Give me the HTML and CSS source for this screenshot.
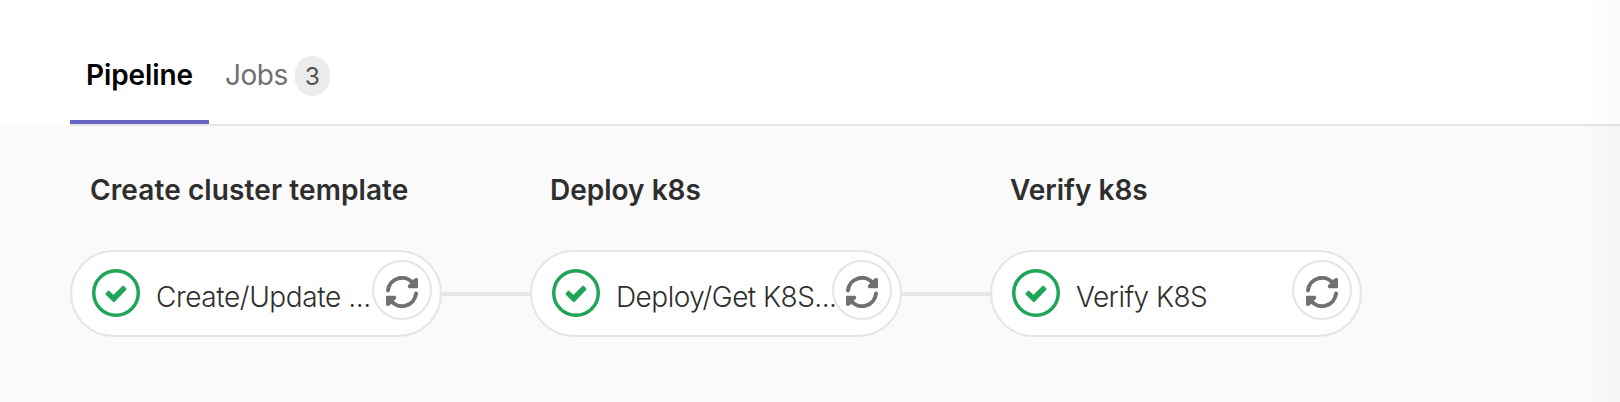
FILE: index.html
```html
<!DOCTYPE html>
<html lang="en">
<head>
<meta charset="utf-8">
<title>Pipeline</title>
<link rel="stylesheet" href="styles.css">
</head>
<body>
<svg class="sprite" aria-hidden="true">
  <symbol id="success" viewBox="0 0 14 14">
    <circle cx="7" cy="7" r="6.5" fill="none" stroke="currentColor"/>
    <path fill="currentColor" stroke="currentColor" stroke-width=".16" d="M6.278 7.597L5.045 6.464a.296.296 0 0 0-.42-.002l-.513.614a.298.298 0 0 0 .002.42l1.91 1.909a.5.5 0 0 0 .703.005l.265-.265L9.897 6.04a.291.291 0 0 0-.009-.408l-.614-.614a.29.29 0 0 0-.408-.009L6.278 7.597z"/>
  </symbol>
  <symbol id="retry" viewBox="0 0 16 16">
    <path fill="none" stroke="currentColor" stroke-width="2" stroke-linecap="round" d="M1 7.200a7 7 0 0 1 12.600-3.400M15 8.800a7 7 0 0 1-12.600 3.400"/>
    <path fill="currentColor" d="M13 2.400L14.300 1.200Q16 .6 16 1.700V5.600a.5.5 0 0 1-.5.500H11.800c-.9 0-1.200-1.200-.5-1.700L12 3.600zM3 13.600L1.700 14.800Q0 15.400 0 14.300V10.400a.5.5 0 0 1 .5-.5H4.200c.9 0 1.200 1.200.5 1.700L4 12.400z"/>
  </symbol>
</svg>
<nav class="tabs">
  <a class="tab active"><span class="tab-label">Pipeline</span></a>
  <a class="tab"><span class="tab-label">Jobs</span><span class="badge">3</span></a>
</nav>
<main class="graph">
  <section class="stage">
    <h2 class="stage-title wide">Create cluster template</h2>
    <div class="job"><svg class="status"><use href="#success"/></svg><span class="job-name wide">Create/Update ...</span><button class="retry"><svg class="retry-icon"><use href="#retry"/></svg></button></div>
  </section>
  <span class="connector"></span>
  <section class="stage">
    <h2 class="stage-title">Deploy k8s</h2>
    <div class="job"><svg class="status"><use href="#success"/></svg><span class="job-name">Deploy/Get K8S...</span><button class="retry"><svg class="retry-icon"><use href="#retry"/></svg></button></div>
  </section>
  <span class="connector"></span>
  <section class="stage">
    <h2 class="stage-title">Verify k8s</h2>
    <div class="job"><svg class="status"><use href="#success"/></svg><span class="job-name">Verify K8S</span><button class="retry"><svg class="retry-icon"><use href="#retry"/></svg></button></div>
  </section>
</main>
<div class="edge-shade"></div>
</body>
</html>
```
FILE: styles.css
```css
* { box-sizing: border-box; }
body {
  margin: 0;
  height: 402px;
  overflow: hidden;
  background: #fafafa;
  color: #2e2e2e;
  font-family: Inter, "Liberation Sans", sans-serif;
  font-size: 28px;
  line-height: 36px;
}
.sprite { display: none; }
.tabs {
  display: flex;
  height: 126px;
  padding: 0 0 0 70px;
  background: linear-gradient(#e5e5e5, #e5e5e5) 70px 100% / 100% 2px no-repeat #fff;
}
.tab {
  display: flex;
  align-items: flex-start;
  height: 124px;
  padding: 57px 16px 0;
  color: #707070;
}
.tab.active {
  width: 139px;
  color: #000;
  font-weight: 600;
  border-bottom: 4px solid #6666c4;
}
.tab-label { white-space: nowrap; letter-spacing: -0.5px; }
.active .tab-label { letter-spacing: -0.1px; }
.badge {
  width: 35px;
  height: 40px;
  margin: -1px 0 0 7px;
  border-radius: 18px;
  background: #ececec;
  color: #525252;
  font-size: 24.5px;
  line-height: 41px;
  text-align: center;
}
.graph { display: flex; padding: 46px 0 0 70px; }
.stage { width: 372px; }
.stage-title {
  margin: 0 0 42px;
  padding-left: 20px;
  font-size: 28px;
  line-height: 36px;
  font-weight: 600;
  white-space: nowrap;
}
.stage-title.wide { letter-spacing: 0.1px; }
.job {
  display: flex;
  align-items: flex-start;
  height: 87px;
  padding: 8px 8px 0 20px;
  border: 2px solid #e5e5e5;
  border-radius: 44px;
  background: #fff;
}
.status { width: 48px; height: 48px; margin-top: 9px; flex: none; color: #1fa557; }
.job-name {
  flex: 1;
  min-width: 0;
  margin: 19px 0 0 16px;
  font-weight: 300;
  letter-spacing: -0.53px;
  white-space: nowrap;
}
.job-name.wide { letter-spacing: -0.4px; }
.retry {
  display: flex;
  flex: none;
  justify-content: center;
  width: 60px;
  height: 60px;
  padding: 14px 0 0;
  border: 2px solid #e5e5e5;
  border-radius: 50%;
  background: #fff;
  color: #707070;
}
.retry-icon { width: 32px; height: 32px; flex: none; }
.connector { width: 88px; height: 4px; margin-top: 120px; background: #e5e5e5; }
.edge-shade {
  position: absolute;
  top: 0;
  right: 0;
  width: 32px;
  height: 402px;
  background: linear-gradient(to right, rgba(0,0,0,0), rgba(0,0,0,.025));
}
```
